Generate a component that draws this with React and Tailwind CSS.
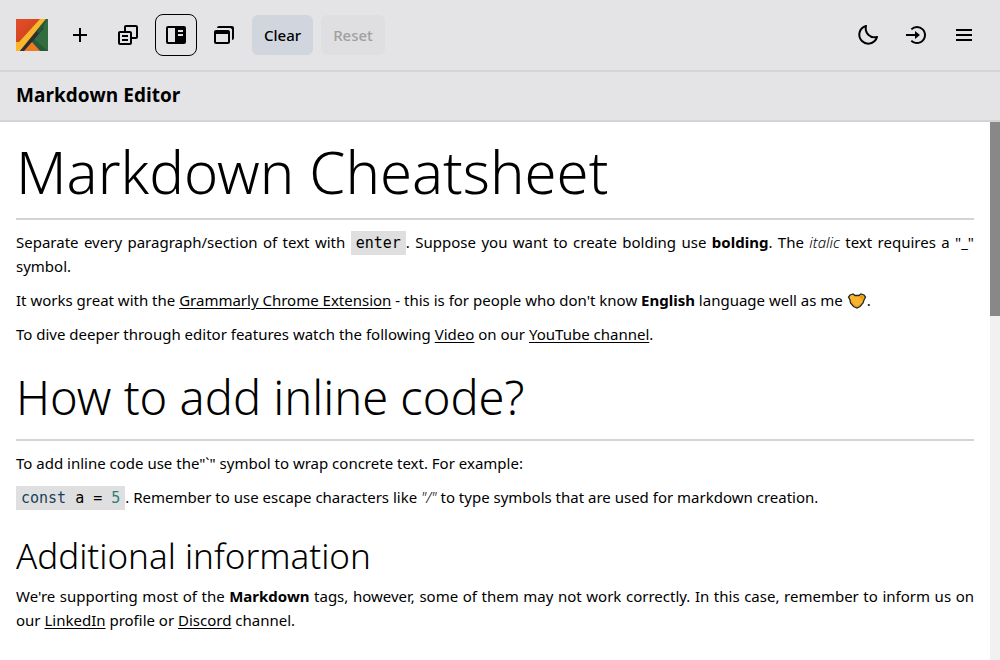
import React from "react";
import { BiPlus, BiCopyAlt, BiWindows, BiMoon, BiLogInCircle, BiMenu } from "react-icons/bi";

function Logo() {
  return (
    <svg viewBox="0 0 32 32" className="size-8" aria-hidden="true">
      <defs>
        <linearGradient id="logo-red" x1="0" y1="0" x2="1" y2="1">
          <stop offset="0" stopColor="#e2502a" />
          <stop offset="1" stopColor="#c83d18" />
        </linearGradient>
      </defs>
      <rect width="32" height="32" fill="#326d40" />
      <path d="M0 0H25L3 23H0Z" fill="url(#logo-red)" />
      <path d="M17 19 32 32H24L15 23Z" fill="#28593a" />
      <path d="M0 32V23H3L24 0H30L4 32Z" fill="#fbb62b" />
      <path d="M4 32 22 10 28 9 16 23 9 32Z" fill="#2c2e30" />
      <path d="M21 11 30 0H31L26 11 22 15Z" fill="#28563a" />
      <path d="M16 23 24 32H8Z" fill="#ef7a20" />
    </svg>
  );
}

function SplitViewIcon() {
  return (
    <svg viewBox="0 0 24 24" className="size-6" fill="currentColor" aria-hidden="true">
      <path
        fillRule="evenodd"
        d="M4 3h16a2 2 0 0 1 2 2v14a2 2 0 0 1-2 2H4a2 2 0 0 1-2-2V5a2 2 0 0 1 2-2Zm0 2v14h7V5H4Zm10 2v2h5V7h-5Zm0 4v2h5v-2h-5Z"
      />
    </svg>
  );
}

function IconButton({ label, active, children }) {
  return (
    <button
      type="button"
      aria-label={label}
      className={
        active
          ? "flex size-[42px] items-center justify-center rounded-lg border border-black text-2xl"
          : "flex size-10 items-center justify-center rounded-lg text-2xl"
      }
    >
      {children}
    </button>
  );
}

function Link({ children }) {
  return (
    <a href="#" className="underline underline-offset-2">
      {children}
    </a>
  );
}

function Code({ children }) {
  return (
    <code className="bg-[#dfdfdf] px-[5px] py-[3px] font-['DejaVu_Sans_Mono',monospace] text-[15px] leading-none">{children}</code>
  );
}

function HeartFace() {
  return (
    <svg viewBox="0 0 20 16" className="inline-block h-4 w-5 align-[-3px]" role="img" aria-label="heart">
      <path
        d="M3 2 6 1 8 2.500H12L14 1 17 2 18.500 4 17 7 16 10 13 13.500 10 15 6.500 13.500 3.500 10 3 7 1.500 4Z"
        fill="#f9b32f"
        stroke="#252525"
        strokeWidth="1.300"
      />
      <path d="M13 2.500 16.500 3 16 7 13 5Z" fill="#ef9800" />
      <path d="M4 8 7 12 10 13.500 14 11" fill="none" stroke="#e49a1c" />
    </svg>
  );
}

export default function App() {
  return (
    <div className="flex h-screen flex-col bg-white font-['Noto_Sans',sans-serif] text-black">
      <header className="flex items-center justify-between border-b-2 border-[#d4d4d6] bg-[#e4e4e6] px-4 py-3.5">
        <div className="flex items-center gap-2">
          <Logo />
          <div className="ml-1 flex items-center gap-2">
            <IconButton label="New document"><BiPlus /></IconButton>
            <IconButton label="Templates"><BiCopyAlt /></IconButton>
            <div className="-mx-px"><IconButton label="Side by side view" active><SplitViewIcon /></IconButton></div>
            <IconButton label="Windowed view"><BiWindows /></IconButton>
          </div>
          <button type="button" className="h-10 rounded-md bg-[#d1d5dd] px-3 text-[15px] font-medium">Clear</button>
          <button type="button" disabled className="h-10 rounded-md bg-[#dfdfe1] px-3 text-[15px] font-medium text-[#a0a0a2]">Reset</button>
        </div>
        <nav className="flex items-center gap-2">
          <IconButton label="Dark theme"><BiMoon /></IconButton>
          <IconButton label="Sign in"><BiLogInCircle /></IconButton>
          <IconButton label="Menu"><BiMenu /></IconButton>
        </nav>
      </header>
      <div className="border-b-2 border-[#d4d4d6] bg-[#e4e4e6] px-4 pt-[9px] pb-[11px]">
        <p className="font-['Open_Sans',sans-serif] text-[19px] leading-7 font-bold">Markdown Editor</p>
      </div>
      <div className="flex min-h-0 flex-1">
        <main className="min-w-0 flex-1 overflow-hidden p-4 text-[15px] leading-6">
          <h1 className="border-b-2 border-[#d4d4d8] pb-3 text-[58px] leading-[68px] font-light">Markdown Cheatsheet</h1>
          <div className="mt-2.5 flex flex-col gap-2.5 text-justify">
            <p>
              Separate every paragraph/section of text with <Code>enter</Code>. Suppose you want to create bolding use{" "}
              <strong>bolding</strong>. The <em className="font-light">italic</em> text requires a "_" symbol.
            </p>
            <p>
              It works great with the <Link>Grammarly Chrome Extension</Link> - this is for people who don't know{" "}
              <strong>English</strong> language well as me <HeartFace />.
            </p>
            <p>
              To dive deeper through editor features watch the following <Link>Video</Link> on our{" "}
              <Link>YouTube channel</Link>.
            </p>
          </div>
          <h2 className="mt-[25px] border-b-2 border-[#d4d4d8] pb-4 text-[47px] leading-[52px] font-light">How to add inline code?</h2>
          <div className="mt-2.5 flex flex-col gap-2.5 text-justify">
            <p>To add inline code use the"`" symbol to wrap concrete text. For example:</p>
            <p>
              <Code>
                <span className="text-[#183f5c]">const</span> a = <span className="text-[#2c7d76]">5</span>
              </Code>
              . Remember to use escape characters like <em className="font-light">"/"</em> to type symbols that are used for markdown creation.
            </p>
          </div>
          <h3 className="mt-[23px] text-[35px] leading-[48px] font-light">Additional information</h3>
          <p className="mt-1 text-justify">
            We're supporting most of the <strong>Markdown</strong> tags, however, some of them may not work correctly. In this
            case, remember to inform us on our <Link>LinkedIn</Link> profile or <Link>Discord</Link> channel.
          </p>
        </main>
        <div className="w-2.5 bg-[#f1f1f1]" aria-hidden="true">
          <div className="h-[36%] bg-[#888888]" />
        </div>
      </div>
    </div>
  );
}
